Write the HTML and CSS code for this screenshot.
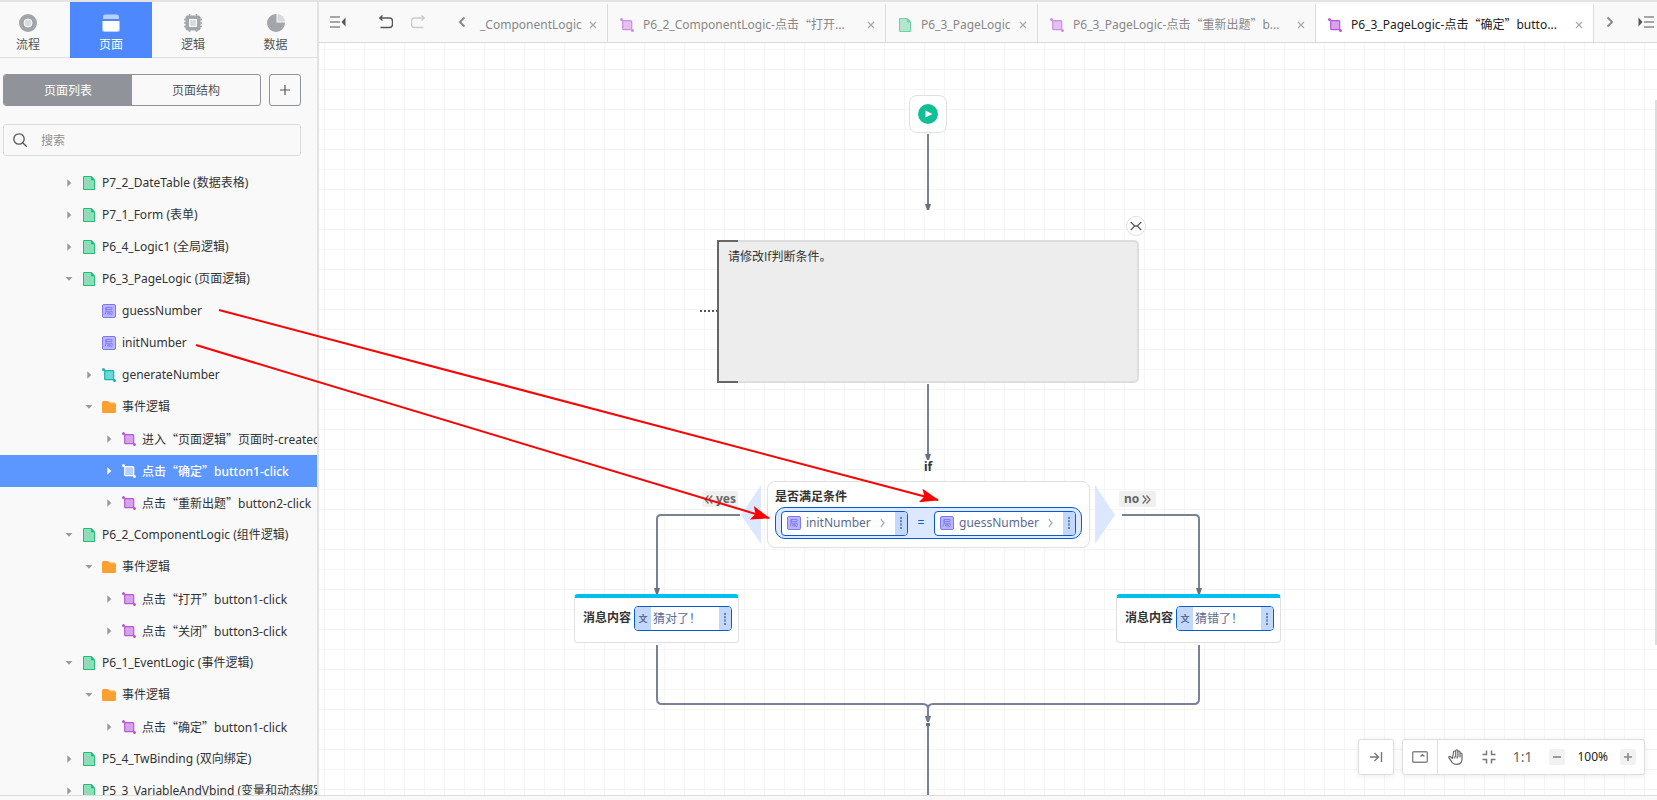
FILE: index.html
```html
<!DOCTYPE html>
<html lang="zh-CN">
<head>
<meta charset="utf-8">
<title>P6_3_PageLogic</title>
<link rel="stylesheet" href="styles.css">
</head>
<body>
<svg class="defs" aria-hidden="true">
  <symbol id="i-file" viewBox="0 0 14 14"><path d="M1.5.5h8l3 3.5v9.5h-11z" fill="#8fdcb8" stroke="#1fbf78"/><path d="M9 0l4 4.300H9z" fill="#1fbf78"/></symbol>
  <symbol id="i-logic" viewBox="0 0 14 14"><path d="M1.500 1.500l11 11" stroke="currentColor"/><rect x="2.700" y="2.700" width="9" height="9" rx="1" fill="var(--fill)" stroke="currentColor" stroke-width="1.200"/><circle cx="1.500" cy="1.500" r="1.500" fill="currentColor"/><circle cx="12.500" cy="12.500" r="1.500" fill="currentColor"/></symbol>
  <symbol id="i-folder" viewBox="0 0 14 14"><path d="M7 2h5.500q1 0 1 1v3H7z" fill="#ffd49a"/><path d="M0 2.500Q0 1 1.500 1h3.800q1 0 1.600.8L8 3.300h4.500q1.500 0 1.500 1.500v6.700q0 1.500-1.500 1.500h-11Q0 13 0 11.500z" fill="#fca130"/></symbol>
  <symbol id="i-var" viewBox="0 0 14 14"><rect x=".5" y=".5" width="13" height="13" rx="1.500" fill="#b9b5ff" stroke="#7d78f5"/><path d="M4 3.500h6v2H4zM4 3.500v3.500q0 2-1 3.500M4 7.300h6.200v2q0 1.500-1.500 1.500M5.700 8.700h2.600v1.400H5.700z" fill="none" stroke="#7d78f5" stroke-width=".9"/></symbol>
  <symbol id="i-right" viewBox="0 0 10 10"><path d="M3.300 1.200v7.600L7.300 5z" fill="currentColor"/></symbol>
  <symbol id="i-down" viewBox="0 0 10 10"><path d="M1.500 3h7L5 6.700z" fill="currentColor"/></symbol>
  <symbol id="i-x" viewBox="0 0 8 8"><path d="M1 1l6 6M7 1L1 7" stroke="currentColor" stroke-width="1.200"/></symbol>
  <symbol id="i-menu" viewBox="0 0 16 14"><path d="M0 2h10M0 7h10M0 12h10" stroke="#8a8a8a" stroke-width="1.600"/><path d="M15.500 2.500v9L11.500 7z" fill="#555"/></symbol>
  <symbol id="i-undo" viewBox="0 0 14 14"><path d="M.500 3h10q3 0 3 3v3.500q0 3-3 3H1.500M3.500.5L.8 3l2.700 2.500" fill="none" stroke="currentColor" stroke-width="1.400"/></symbol>
  <symbol id="i-chev" viewBox="0 0 8 12"><path d="M6.500 1.500L1.800 6l4.700 4.500" fill="none" stroke="#888" stroke-width="1.800"/></symbol>
  <symbol id="i-dbl" viewBox="0 0 9 9"><path d="M.700.500l3.500 4-3.500 4M4.500.500l3.500 4-3.500 4" fill="none" stroke="currentColor" stroke-width="1.200"/></symbol>
  <symbol id="i-next" viewBox="0 0 6 10"><path d="M1 1q1.500 3.500 3.500 4Q2.500 5.500 1 9" fill="none" stroke="#9ba5bb" stroke-width="1.200"/></symbol>
  <symbol id="i-dots" viewBox="0 0 4 12"><path d="M1 0h2v2H1zM1 3.300h2v2H1zM1 6.600h2v2H1zM1 10h2v2H1z" fill="#5f7fb8"/></symbol>
</svg>

<div class="app">
  <aside class="side">
    <nav class="modes">
      <button class="mode first"><svg width="18" height="18"><circle cx="9" cy="9" r="9" fill="#a3a5a9"/><circle cx="9" cy="9" r="4" fill="#d9dadb" stroke="#fff"/></svg>流程</button>
      <button class="mode on"><svg width="18" height="18"><path d="M1 5V3q0-2.500 2.500-2.500h11Q17 .5 17 3v2z" fill="#b8d0ff"/><path d="M0 7h18v9q0 2-2 2H2q-2 0-2-2z" fill="#a6c4ff"/><path d="M1 7h16v8q0 2.300-2.300 2.300H3.300Q1 17.300 1 15z" fill="#fff"/></svg>页面</button>
      <button class="mode"><svg width="18" height="18"><path d="M5.500 0v18M12.500 0v18M0 5.500h18M0 9h18M0 12.500h18" stroke="#a3a5a9" stroke-width="1.500"/><rect x="1.500" y="1.500" width="15" height="15" rx="2" fill="#a3a5a9"/><rect x="5.500" y="5.500" width="7" height="7" fill="#d9dadb" stroke="#fff"/></svg>逻辑</button>
      <button class="mode"><svg width="18" height="18"><circle cx="9" cy="9" r="9" fill="#a3a5a9"/><path d="M9.500 0H18v8.500H9.500z" fill="#f9f9f9"/><path d="M10.500 0a8 8 0 0 1 7.500 7.500h-7.500z" fill="#d9dadb"/></svg>数据</button>
    </nav>
    <div class="switch-row">
      <div class="switch"><button class="seg on">页面列表</button><button class="seg">页面结构</button></div>
      <button class="add" aria-label="新增"><svg width="10" height="10"><path d="M5 0v10M0 5h10" stroke="#555" stroke-width="1.200"/></svg></button>
    </div>
    <label class="search">
      <svg width="14" height="14"><circle cx="6" cy="6" r="5.200" fill="none" stroke="#555" stroke-width="1.300"/><path d="M10 10l3.700 3.700" stroke="#555" stroke-width="1.300"/></svg>
      <input type="text" placeholder="搜索" aria-label="搜索">
    </label>
    <div class="tree">
      <button class="row l1"><svg class="caret"><use href="#i-right"/></svg><svg class="ic"><use href="#i-file"/></svg><span>P7_2_DateTable (数据表格)</span></button>
      <button class="row l1"><svg class="caret"><use href="#i-right"/></svg><svg class="ic"><use href="#i-file"/></svg><span>P7_1_Form (表单)</span></button>
      <button class="row l1"><svg class="caret"><use href="#i-right"/></svg><svg class="ic"><use href="#i-file"/></svg><span>P6_4_Logic1 (全局逻辑)</span></button>
      <button class="row l1"><svg class="caret"><use href="#i-down"/></svg><svg class="ic"><use href="#i-file"/></svg><span>P6_3_PageLogic (页面逻辑)</span></button>
      <button class="row l2"><svg class="caret"></svg><svg class="ic"><use href="#i-var"/></svg><span>guessNumber</span></button>
      <button class="row l2"><svg class="caret"></svg><svg class="ic"><use href="#i-var"/></svg><span>initNumber</span></button>
      <button class="row l2"><svg class="caret"><use href="#i-right"/></svg><svg class="ic teal"><use href="#i-logic"/></svg><span>generateNumber</span></button>
      <button class="row l2"><svg class="caret"><use href="#i-down"/></svg><svg class="ic"><use href="#i-folder"/></svg><span>事件逻辑</span></button>
      <button class="row l3"><svg class="caret"><use href="#i-right"/></svg><svg class="ic violet"><use href="#i-logic"/></svg><span>进入<q>页面逻辑</q>页面时-created</span></button>
      <button class="row l3 on"><svg class="caret"><use href="#i-right"/></svg><svg class="ic white"><use href="#i-logic"/></svg><span>点击<q>确定</q>button1-click</span></button>
      <button class="row l3"><svg class="caret"><use href="#i-right"/></svg><svg class="ic violet"><use href="#i-logic"/></svg><span>点击<q>重新出题</q>button2-click</span></button>
      <button class="row l1"><svg class="caret"><use href="#i-down"/></svg><svg class="ic"><use href="#i-file"/></svg><span>P6_2_ComponentLogic (组件逻辑)</span></button>
      <button class="row l2"><svg class="caret"><use href="#i-down"/></svg><svg class="ic"><use href="#i-folder"/></svg><span>事件逻辑</span></button>
      <button class="row l3"><svg class="caret"><use href="#i-right"/></svg><svg class="ic violet"><use href="#i-logic"/></svg><span>点击<q>打开</q>button1-click</span></button>
      <button class="row l3"><svg class="caret"><use href="#i-right"/></svg><svg class="ic violet"><use href="#i-logic"/></svg><span>点击<q>关闭</q>button3-click</span></button>
      <button class="row l1"><svg class="caret"><use href="#i-down"/></svg><svg class="ic"><use href="#i-file"/></svg><span>P6_1_EventLogic (事件逻辑)</span></button>
      <button class="row l2"><svg class="caret"><use href="#i-down"/></svg><svg class="ic"><use href="#i-folder"/></svg><span>事件逻辑</span></button>
      <button class="row l3"><svg class="caret"><use href="#i-right"/></svg><svg class="ic violet"><use href="#i-logic"/></svg><span>点击<q>确定</q>button1-click</span></button>
      <button class="row l1"><svg class="caret"><use href="#i-right"/></svg><svg class="ic"><use href="#i-file"/></svg><span>P5_4_TwBinding (双向绑定)</span></button>
      <button class="row l1"><svg class="caret"><use href="#i-right"/></svg><svg class="ic"><use href="#i-file"/></svg><span>P5_3_VariableAndVbind (变量和动态绑定)</span></button>
    </div>
  </aside>

  <main class="main">
    <header class="bar">
      <div class="tools">
        <button aria-label="收起"><svg width="16" height="14"><use href="#i-menu"/></svg></button>
        <button class="undo" aria-label="撤销"><svg width="14" height="14"><use href="#i-undo"/></svg></button>
        <button class="redo" aria-label="重做"><svg class="flip" width="14" height="14"><use href="#i-undo"/></svg></button>
        <button class="prev" aria-label="向左"><svg width="8" height="12"><use href="#i-chev"/></svg></button>
      </div>
      <div class="tabs">
        <div class="tab t1"><button class="name">_ComponentLogic</button><button class="close" aria-label="关闭"><svg><use href="#i-x"/></svg></button></div>
        <div class="tab wide"><svg class="ic violet"><use href="#i-logic"/></svg><button class="name">P6_2_ComponentLogic-点击<i>“</i>打开...</button><button class="close" aria-label="关闭"><svg><use href="#i-x"/></svg></button></div>
        <div class="tab mid"><svg class="ic"><use href="#i-file"/></svg><button class="name">P6_3_PageLogic</button><button class="close" aria-label="关闭"><svg><use href="#i-x"/></svg></button></div>
        <div class="tab wide"><svg class="ic violet"><use href="#i-logic"/></svg><button class="name">P6_3_PageLogic-点击<q>重新出题</q>b...</button><button class="close" aria-label="关闭"><svg><use href="#i-x"/></svg></button></div>
        <div class="tab wide on"><svg class="ic violet"><use href="#i-logic"/></svg><button class="name">P6_3_PageLogic-点击<q>确定</q>butto...</button><button class="close" aria-label="关闭"><svg><use href="#i-x"/></svg></button></div>
      </div>
      <div class="ends">
        <button aria-label="向右"><svg class="flip" width="8" height="12"><use href="#i-chev"/></svg></button>
        <button aria-label="展开"><svg class="flip" width="16" height="14"><use href="#i-menu"/></svg></button>
      </div>
    </header>

    <section class="canvas">
      <svg class="wires" aria-hidden="true">
        <defs><marker id="tip" markerUnits="userSpaceOnUse" markerWidth="8" markerHeight="8" refX="5" refY="4" orient="auto"><path d="M1 1l6 2v2L1 7z" fill="#666f84"/></marker></defs>
        <g fill="none" stroke="#788196" stroke-width="2">
          <path d="M609 91v74" marker-end="url(#tip)"/>
          <path d="M609 341v74" marker-end="url(#tip)"/>
          <path d="M421 472h-79q-4 0-4 4v73" marker-end="url(#tip)"/>
          <path d="M803 472h73q4 0 4 4v73" marker-end="url(#tip)"/>
          <path d="M338 602v54q0 5 5 5h261q5 0 5 5v11" marker-end="url(#tip)"/>
          <path d="M880 602v54q0 5-5 5H614q-5 0-5 5v11"/>
          <path d="M609 680v400"/>
          <path d="M607 681.500h4" stroke="#666f84" stroke-width="3"/>
        </g>
        <path d="M381 268h18" stroke="#555" stroke-width="2" stroke-dasharray="2 2"/>
        <path d="M442 442v59l-20-29zM776 442v59l20-29z" fill="#dce8ff"/>
      </svg>
      <div class="node start"><svg width="20" height="20"><circle cx="10" cy="10" r="10" fill="#10bf95"/><path d="M7.500 6.500l7 3.500-7 3.500z" fill="#fff"/></svg></div>
      <button class="fold" aria-label="折叠"><svg width="12" height="10"><path d="M.7.900L4.700 5 .7 9.100M11.300.900L7.300 5l4 4.100M4 5h4" fill="none" stroke="#555" stroke-width="1.300"/></svg></button>
      <div class="note">请修改If判断条件。</div>
      <strong class="if">if</strong>
      <span class="branch yes"><svg class="flip"><use href="#i-dbl"/></svg>yes</span>
      <span class="branch no">no<svg><use href="#i-dbl"/></svg></span>
      <div class="node cond">
        <strong>是否满足条件</strong>
        <div class="expr">
          <div class="pill"><svg class="ic"><use href="#i-var"/></svg><span>initNumber</span><svg class="next"><use href="#i-next"/></svg><button class="more" aria-label="更多"><svg><use href="#i-dots"/></svg></button></div>
          <b class="eq">=</b>
          <div class="pill"><svg class="ic"><use href="#i-var"/></svg><span>guessNumber</span><svg class="next"><use href="#i-next"/></svg><button class="more" aria-label="更多"><svg><use href="#i-dots"/></svg></button></div>
        </div>
      </div>
      <div class="node msg left"><label for="m1">消息内容</label><div class="text"><span>文</span><input id="m1" type="text" value="猜对了！"><button class="more" aria-label="更多"><svg><use href="#i-dots"/></svg></button></div></div>
      <div class="node msg right"><label for="m2">消息内容</label><div class="text"><span>文</span><input id="m2" type="text" value="猜错了！"><button class="more" aria-label="更多"><svg><use href="#i-dots"/></svg></button></div></div>

      <div class="dock">
        <button class="box" aria-label="收起工具"><svg width="14" height="12"><path d="M1 6h8M5.500 2L9.500 6l-4 4M12.500 1v10" fill="none" stroke="#777" stroke-width="1.400"/></svg></button>
        <div class="box group">
          <button class="map" aria-label="小地图"><svg width="16" height="12"><rect x=".7" y=".7" width="14.600" height="10.600" rx="1" fill="none" stroke="#888" stroke-width="1.400"/><path d="M8.500 5.500l2-1.800 2 1.800" fill="none" stroke="#777" stroke-width="1.300"/></svg></button>
          <button aria-label="拖动"><svg width="16" height="16"><path d="M4.500 9.500L2.600 7.700q-1-.7-1.600 0-.5.600.2 1.400l3.300 4.700Q6 15.300 8.500 15.300q5.500 0 5.500-5V5q-.1-1-1-1t-1 1v3V3q-.1-1-1.100-1t-1 1v4.500V1.800q-.1-1-1.100-1t-1.100 1v5.700V3q-.1-1-1.100-1t-1.100 1zM6.700 7.500v2M9.200 7.500v2" fill="none" stroke="#666" stroke-width="1.200" stroke-linejoin="round"/></svg></button>
          <button class="fit" aria-label="适应"><svg width="14" height="14"><path d="M.500 4.500h4v-4M9.500.500v4h4M.500 9.500h4v4M13.500 9.500h-4v4" fill="none" stroke="#777" stroke-width="1.500"/></svg></button>
          <button class="one">1:1</button>
          <button class="sq" aria-label="缩小"><svg width="8" height="8"><path d="M0 4h8" stroke="#888" stroke-width="1.600"/></svg></button>
          <output>100%</output>
          <button class="sq" aria-label="放大"><svg width="8" height="8"><path d="M0 4h8M4 0v8" stroke="#888" stroke-width="1.600"/></svg></button>
        </div>
      </div>
      <div class="thumb"></div>
    </section>
  </main>
</div>

<svg class="guides" aria-hidden="true">
  <defs><marker id="red" markerUnits="userSpaceOnUse" markerWidth="20" markerHeight="14" refX="18" refY="7" orient="auto"><path d="M0 0l19 7-19 7 4-7z" fill="#f00"/></marker></defs>
  <line x1="219" y1="310" x2="938" y2="500" stroke="#f00" stroke-width="2" marker-end="url(#red)"/>
  <line x1="196" y1="345" x2="769" y2="518" stroke="#f00" stroke-width="2" marker-end="url(#red)"/>
</svg>
</body>
</html>
```
FILE: styles.css
```css
* { box-sizing: border-box; }
body {
  margin: 0;
  height: 100vh;
  position: relative;
  overflow: hidden;
  background: #f9f9f9;
  color: #333;
  font: 12px/16px "Noto Sans", "Noto Sans CJK SC", sans-serif;
}
button, input { font: inherit; color: inherit; border: 0; background: none; padding: 0; margin: 0; outline: 0; }
button { display: flex; align-items: center; justify-content: center; white-space: nowrap; }
svg { flex: none; display: block; }
q { quotes: "“" "”"; }
q::before, q::after, i { font-family: "Noto Sans CJK SC", sans-serif; font-style: normal; }
.defs { position: absolute; width: 0; height: 0; }
.flip { transform: scaleX(-1); }

.app {
  height: 100%;
  padding: 1px 0 4px;
  display: flex;
  box-shadow: inset 0 2px 0 #e4e4e4;
}

/* sidebar */
.side {
  flex: none;
  width: 319px;
  display: flex;
  flex-direction: column;
  border-right: 2px solid #e2e2e2;
  border-bottom: 1px solid #dcdcdc;
  overflow: hidden;
  padding-top: 1px;
}
.modes { flex: none; display: flex; height: 56px; box-shadow: inset 0 -1px 0 #dedede; }
.mode { width: 82px; flex-direction: column; gap: 5px; padding-top: 6px; color: #555; }
.mode.first { width: 70px; padding-right: 14px; }
.mode:last-child { width: 83px; }
.mode.on { background: #4d88ff; color: #fff; }
.switch-row { flex: none; display: flex; gap: 8px; margin: 16px 16px 0 3px; height: 32px; }
.switch { flex: 1; display: flex; border: 1px solid #909399; border-radius: 3px; overflow: hidden; }
.seg { flex: 1; padding-top: 2px; color: #555; }
.seg.on { background: #909399; color: #fff; }
.add { width: 32px; border: 1px solid #909399; border-radius: 3px; }
.search {
  flex: none; display: flex; align-items: center; gap: 14px;
  margin: 18px 16px 11px 3px; height: 32px; padding-left: 9px;
  border: 1px solid #dcdcdc; border-radius: 3px;
}
.search input { flex: 1; min-width: 0; padding-top: 2px; }
.search input::placeholder { color: #8f8f8f; opacity: 1; }
.tree { flex: 1; min-height: 0; overflow: hidden; }
.row { width: 100%; height: 32px; justify-content: flex-start; }
.row span { padding-left: 6px; }
.l1 { padding-left: 64px; }
.l2 { padding-left: 84px; }
.l3 { padding-left: 104px; }
.caret { width: 10px; height: 10px; margin-right: 8px; color: #999; }
.row.on { background: #5c96ff; color: #fff; font-weight: 500; }
.row.on .caret { color: #fff; }
.ic { width: 14px; height: 14px; }
.teal { color: #13b5b1; --fill: #6fd6d3; }
.violet { color: #b558d8; --fill: #d9a3ec; }
.white { color: #fff; --fill: #b5d0ff; }

/* tab bar */
.main { flex: 1; min-width: 0; display: flex; flex-direction: column; border-bottom: 1px solid #dcdcdc; }
.bar { flex: none; display: flex; height: 42px; padding-top: 3px; border-bottom: 1px solid #d8d8d8; box-shadow: 0 1px 0 #f0f0f0; }
.tools { flex: none; display: flex; align-items: center; padding: 0 8px 2px 11px; }
.undo { margin-left: 33px; color: #555; }
.redo { margin-left: 18px; color: #ccc; }
.prev { margin-left: 33px; }
.tabs { flex: 1; min-width: 0; display: flex; }
.tab { display: flex; align-items: center; padding: 3px 10px 0 12px; border-right: 1px solid #dcdcdc; color: #888; min-width: 0; }
.tab .ic { margin-right: 9px; opacity: .65; }
.tab .close { margin-left: auto; color: #aaa; }
.close svg { width: 8px; height: 8px; }
.t1 { flex: 1 1 134px; padding-left: 6px; }
.mid { flex: 1 1 152px; }
.wide { flex: 1 1 278px; }
.tab.on { background: #fff; color: #222; }
.tab.on .ic { opacity: 1; }
.ends { flex: none; display: flex; align-items: center; gap: 24px; padding: 0 3px 2px 12px; }

/* flow canvas */
.canvas {
  flex: 1; min-height: 0; position: relative; overflow: hidden;
  background-color: #fff;
  background-image: linear-gradient(#f5f5f5 1px, transparent 1px), linear-gradient(90deg, #f5f5f5 1px, transparent 1px);
  background-size: 20px 20px;
  background-position: 5px 6px;
}
.wires { position: absolute; left: 0; top: 0; width: 100%; height: 100%; }
.node { position: absolute; background: #fff; border: 1px solid #e0e0e0; border-radius: 8px; }
.start { left: 590px; top: 52px; width: 38px; height: 38px; display: flex; align-items: center; justify-content: center; }
.fold { position: absolute; left: 807px; top: 173px; width: 20px; height: 20px; border: 1px solid #e0e0e0; border-radius: 50%; background: #fff; }
.note {
  position: absolute; left: 398px; top: 197px; width: 422px; height: 143px;
  padding: 7px 9px; border: 2px solid #ddd; border-left-color: #666; border-radius: 0 5px 5px 0; background: #ededed;
  font-family: "Open Sans", "Noto Sans CJK SC", sans-serif;
}
.note::before, .note::after { content: ""; position: absolute; left: -2px; width: 21px; height: 2px; background: #666; }
.note::before { top: -2px; }
.note::after { bottom: -2px; }
.if { position: absolute; left: 605px; top: 416px; }
.branch {
  position: absolute; top: 448px; display: flex; align-items: center; gap: 3px;
  height: 16px; border-radius: 2px; background: #f0f0f0; color: #666; font-weight: 700;
}
.branch svg { width: 9px; height: 9px; }
.yes { left: 383px; padding: 0 2px; }
.no { left: 800px; padding: 0 5px; }
.cond { left: 448px; top: 438px; width: 323px; padding: 7px; height: 67px; }
.cond > strong { display: block; margin-bottom: 2px; }
.expr {
  display: flex; align-items: center; height: 32px; padding: 0 5px;
  border: 1px solid #0a5ad0; border-radius: 10px; background: #dce8ff;
  color: #5a6b93;
}
.pill { display: flex; align-items: center; height: 25px; padding-left: 5px; border: 1px solid #0a5ad0; border-radius: 4px; background: #fff; overflow: hidden; }
.pill span { margin: 0 9px 0 5px; }
.next { width: 6px; height: 10px; margin-right: 9px; }
.more { width: 12px; align-self: stretch; background: #c2d8fc; }
.more svg { width: 4px; height: 12px; }
.eq { flex: 1; text-align: center; color: #0a5ad0; font-weight: 400; }
.msg { top: 551px; width: 165px; height: 49px; display: flex; align-items: flex-start; gap: 3px; padding: 12px 6px 0 8px; border-top: 4px solid #00bff3; border-radius: 4px; }
.msg > div { margin-top: -4px; }
.msg.left { left: 255px; }
.msg.right { left: 797px; }
.msg label { font-weight: 700; }
.text { flex: 1; min-width: 0; display: flex; height: 25px; border: 1px solid #0a5ad0; border-radius: 4px; overflow: hidden; color: #5a6b93; }
.text span { width: 16px; background: #c2d8fc; text-align: center; font-size: 9px; line-height: 24px; font-weight: 700; }
.text input { flex: 1; min-width: 0; padding-left: 2px; background: #fff; }

/* floating controls */
.dock { position: absolute; right: 12px; bottom: 20px; display: flex; gap: 8px; }
.box { height: 36px; min-width: 36px; border: 1px solid #dedede; border-radius: 3px; background: #fff; box-shadow: 0 1px 6px rgba(0,0,0,.08); }
.group { display: flex; align-items: center; gap: 20px; padding-right: 8px; }
.map { width: 35px; height: 34px; margin-right: -10px; border-right: 1px solid #dedede; }
.fit { margin-left: -2px; }
.one { margin: 0 -3px; color: #666; font-size: 14px; }
.sq { width: 16px; height: 16px; background: #f2f2f2; border-radius: 2px; }
.group output { margin: 0 -8px; color: #222; }
.thumb { position: absolute; right: 0; top: 57px; width: 2px; height: 545px; background: #ddd; }

.guides { position: absolute; left: 0; top: 0; width: 100%; height: 100%; pointer-events: none; }
```
